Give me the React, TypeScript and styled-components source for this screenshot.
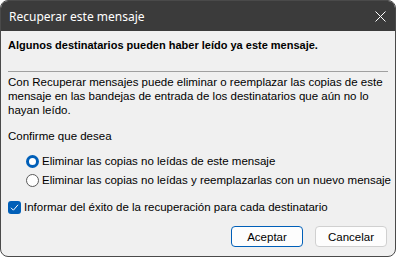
import React, { useState } from 'react';
import styled, { createGlobalStyle } from 'styled-components';

const GlobalStyle = createGlobalStyle`
  html, body {
    margin: 0;
    padding: 0;
    background: #ffffff;
  }
`;

const Window = styled.div`
  box-sizing: border-box;
  width: 396px;
  height: 257px;
  display: flex;
  flex-direction: column;
  background: #f0f0f0;
  border: 1px solid #4a4a4a;
  border-radius: 8px;
  overflow: hidden;
  font-family: 'Liberation Sans', Arial, sans-serif;
  font-size: 11.5px;
  color: #000;
`;

const TitleBar = styled.div`
  height: 30px;
  flex-shrink: 0;
  display: flex;
  align-items: center;
  justify-content: space-between;
  background: #3b3b3b;
  color: #ffffff;
  padding-left: 8px;
  font-family: 'Noto Sans', 'Open Sans', sans-serif;
  font-size: 12px;
`;

const CloseButton = styled.div`
  width: 30px;
  height: 30px;
  display: flex;
  align-items: center;
  justify-content: center;
`;

const Body = styled.div`
  flex: 1;
  display: flex;
  flex-direction: column;
  padding: 0 7px;
`;

const Heading = styled.div`
  font-weight: bold;
  font-size: 11px;
  margin-top: 7px;
  line-height: 14px;
`;

const Separator = styled.hr`
  border: none;
  border-top: 1px solid #a0a0a0;
  margin: 19px 0 3px 0;
`;

const Paragraph = styled.p`
  margin: 0;
  line-height: 14px;
`;

const Label = styled.div`
  margin-top: 12px;
  line-height: 14px;
`;

const RadioGroup = styled.div`
  display: flex;
  flex-direction: column;
  gap: 5px;
  margin-top: 11px;
  padding-left: 18px;
`;

const OptionRow = styled.label`
  display: flex;
  align-items: center;
  gap: 3px;
  line-height: 14px;
  white-space: nowrap;
`;

const RadioMark = styled.span<{ $checked: boolean }>`
  box-sizing: border-box;
  width: 13px;
  height: 13px;
  border-radius: 50%;
  flex-shrink: 0;
  display: inline-block;
  border: ${(p) => (p.$checked ? '3.5px solid #005fb8' : '1px solid #5a5a5a')};
  background: #ffffff;
`;

const CheckRow = styled(OptionRow)`
  margin-top: 13px;
`;

const CheckMark = styled.span`
  width: 13px;
  height: 13px;
  border-radius: 3px;
  background: #005fb8;
  display: flex;
  align-items: center;
  justify-content: center;
  flex-shrink: 0;
`;

const Footer = styled.div`
  display: flex;
  justify-content: flex-end;
  gap: 12px;
  margin-top: 12px;
  padding-right: 1px;
`;

const Button = styled.button<{ $primary?: boolean }>`
  box-sizing: border-box;
  width: 72px;
  height: 21px;
  padding: 0;
  font-family: 'Liberation Sans', Arial, sans-serif;
  font-size: 11.5px;
  color: #000;
  background: #fdfdfd;
  border: 1px solid ${(p) => (p.$primary ? '#005fb8' : '#d0d0d0')};
  border-radius: 4px;
`;

const App: React.FC = () => {
  const [choice, setChoice] = useState(0);

  return (
    <>
      <GlobalStyle />
      <Window>
        <TitleBar>
          <span>Recuperar este mensaje</span>
          <CloseButton>
            <svg width="11" height="11" viewBox="0 0 11 11">
              <path d="M0.5 0.5L10.5 10.5M10.5 0.5L0.5 10.5" stroke="#ffffff" strokeWidth="1" />
            </svg>
          </CloseButton>
        </TitleBar>
        <Body>
          <Heading>Algunos destinatarios pueden haber leído ya este mensaje.</Heading>
          <Separator />
          <Paragraph>
            Con Recuperar mensajes puede eliminar o reemplazar las copias de este
            <br />
            mensaje en las bandejas de entrada de los destinatarios que aún no lo
            <br />
            hayan leído.
          </Paragraph>
          <Label>Confirme que desea</Label>
          <RadioGroup>
            <OptionRow onClick={() => setChoice(0)}>
              <RadioMark $checked={choice === 0} />
              Eliminar las copias no leídas de este mensaje
            </OptionRow>
            <OptionRow onClick={() => setChoice(1)}>
              <RadioMark $checked={choice === 1} />
              Eliminar las copias no leídas y reemplazarlas con un nuevo mensaje
            </OptionRow>
          </RadioGroup>
          <CheckRow>
            <CheckMark>
              <svg width="9" height="9" viewBox="0 0 9 9">
                <path d="M1 4.8L3.4 7.2L8 1.8" fill="none" stroke="#ffffff" strokeWidth="1" />
              </svg>
            </CheckMark>
            Informar del éxito de la recuperación para cada destinatario
          </CheckRow>
          <Footer>
            <Button $primary>Aceptar</Button>
            <Button>Cancelar</Button>
          </Footer>
        </Body>
      </Window>
    </>
  );
};

export default App;
